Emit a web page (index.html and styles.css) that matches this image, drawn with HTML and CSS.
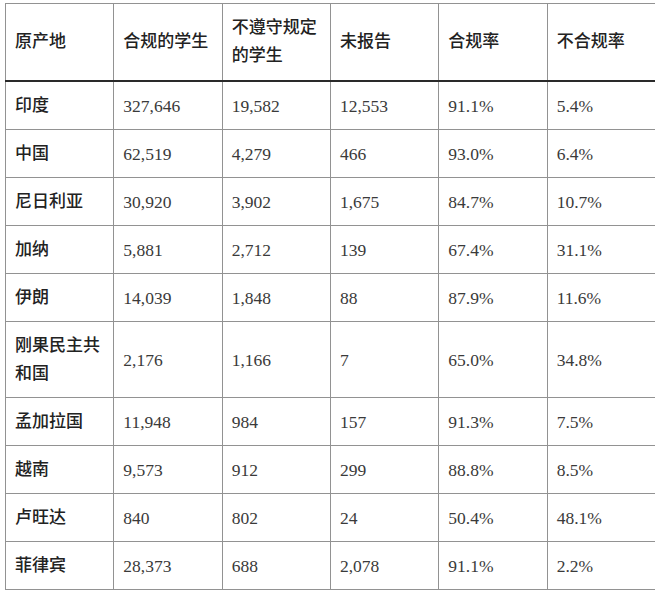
FILE: index.html
```html
<!DOCTYPE html>
<html lang="zh-CN">
<head>
<meta charset="utf-8">
<title>合规统计</title>
<link rel="stylesheet" href="styles.css">
</head>
<body>
<table class="stats">
  <thead>
    <tr>
      <th>原产地</th>
      <th>合规的学生</th>
      <th>不遵守规定的学生</th>
      <th>未报告</th>
      <th>合规率</th>
      <th>不合规率</th>
    </tr>
  </thead>
  <tbody>
    <tr><td class="name">印度</td><td>327,646</td><td>19,582</td><td>12,553</td><td>91.1%</td><td>5.4%</td></tr>
    <tr><td class="name">中国</td><td>62,519</td><td>4,279</td><td>466</td><td>93.0%</td><td>6.4%</td></tr>
    <tr><td class="name">尼日利亚</td><td>30,920</td><td>3,902</td><td>1,675</td><td>84.7%</td><td>10.7%</td></tr>
    <tr><td class="name">加纳</td><td>5,881</td><td>2,712</td><td>139</td><td>67.4%</td><td>31.1%</td></tr>
    <tr><td class="name">伊朗</td><td>14,039</td><td>1,848</td><td>88</td><td>87.9%</td><td>11.6%</td></tr>
    <tr><td class="name">刚果民主共和国</td><td>2,176</td><td>1,166</td><td>7</td><td>65.0%</td><td>34.8%</td></tr>
    <tr><td class="name">孟加拉国</td><td>11,948</td><td>984</td><td>157</td><td>91.3%</td><td>7.5%</td></tr>
    <tr><td class="name">越南</td><td>9,573</td><td>912</td><td>299</td><td>88.8%</td><td>8.5%</td></tr>
    <tr><td class="name">卢旺达</td><td>840</td><td>802</td><td>24</td><td>50.4%</td><td>48.1%</td></tr>
    <tr><td class="name">菲律宾</td><td>28,373</td><td>688</td><td>2,078</td><td>91.1%</td><td>2.2%</td></tr>
  </tbody>
</table>
</body>
</html>
```

FILE: styles.css
```css
html, body {
  background: #ffffff;
}
body {
  margin: 3px 5px;
}
.stats {
  width: 651px;
  table-layout: fixed;
  border-collapse: collapse;
  font-family: "Liberation Serif", "Noto Sans CJK SC", serif;
  font-size: 17.5px;
  line-height: 28px;
  color: #3a3a3a;
}
.stats th,
.stats td {
  border: 1px solid #929292;
  padding: 10px 9px 9px 9px;
  text-align: left;
  vertical-align: middle;
  font-weight: 400;
}
.stats th {
  font-size: 17px;
  font-weight: 500;
  color: #222222;
  padding-bottom: 10px;
  border-bottom: 2px solid #2a2a2a;
}
.stats td.name {
  font-size: 17px;
  font-weight: 500;
  color: #222222;
}
```
